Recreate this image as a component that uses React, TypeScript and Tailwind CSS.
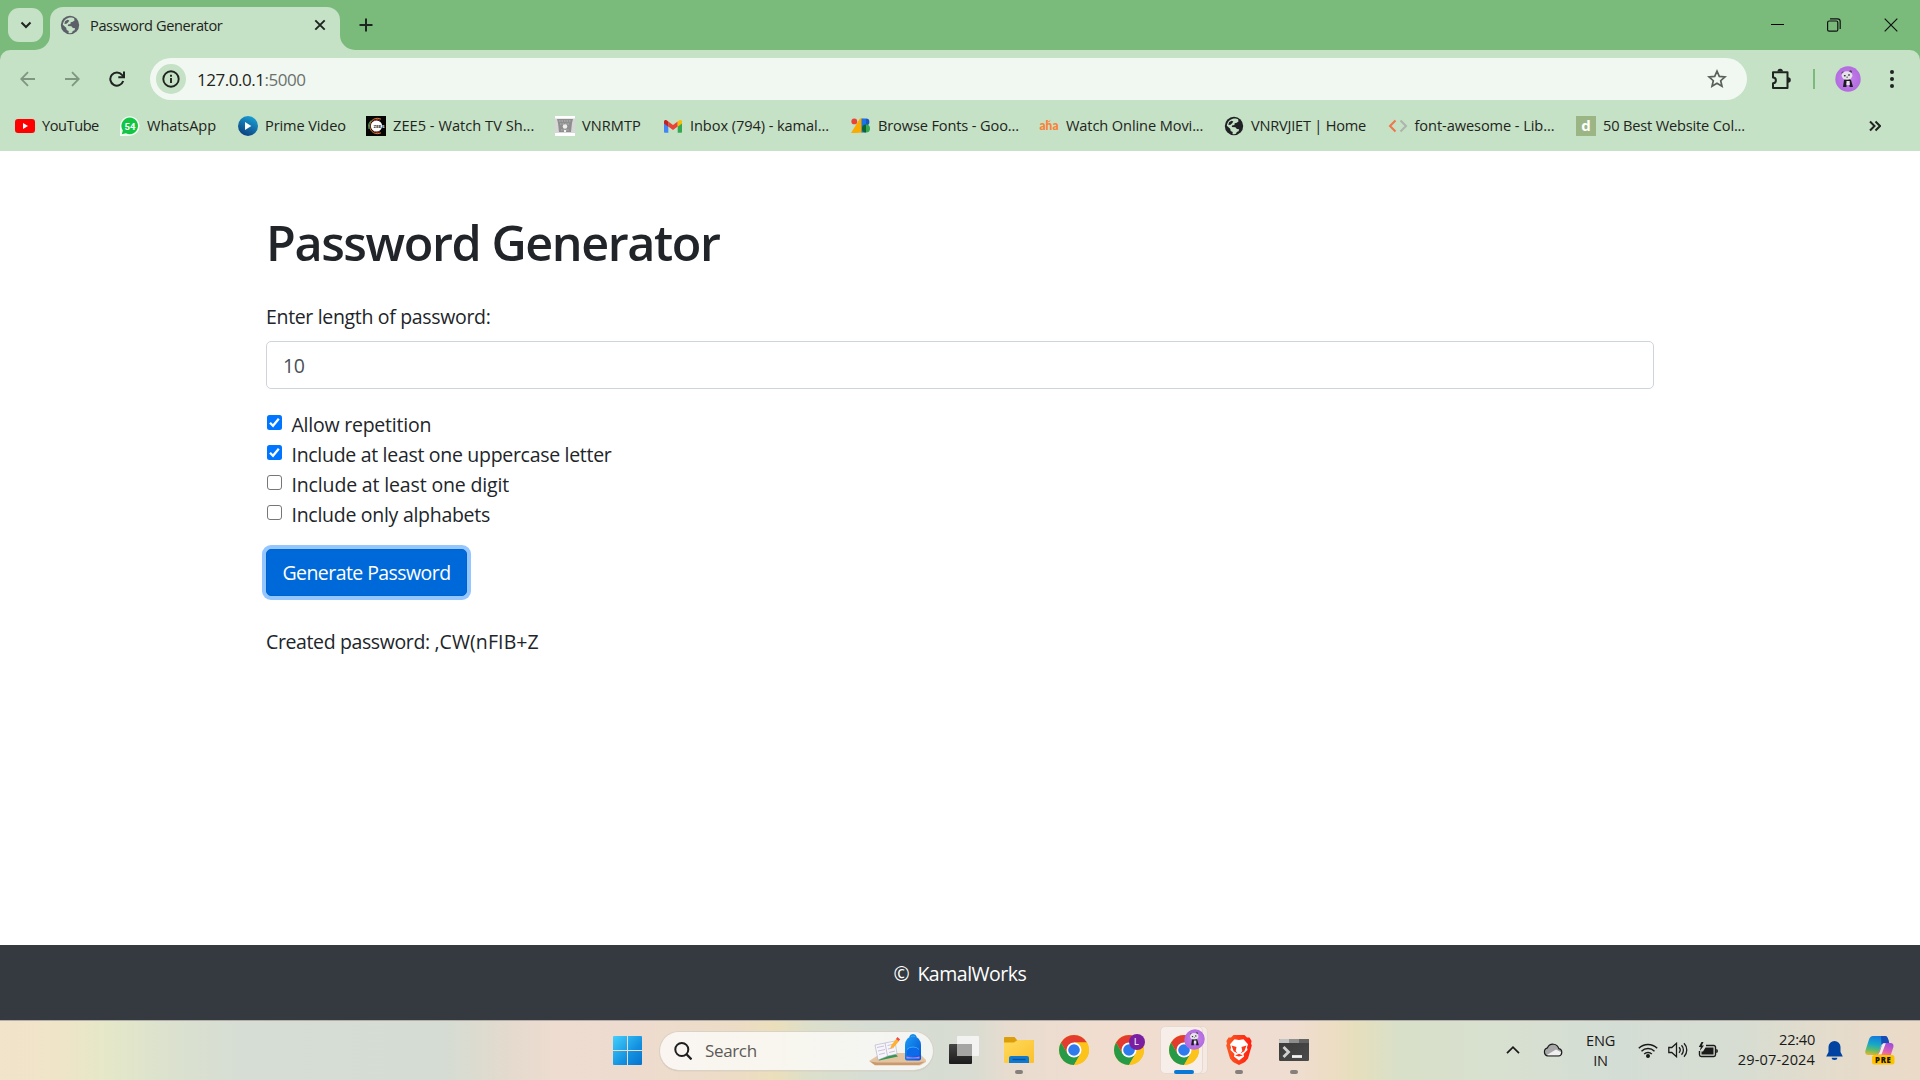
import React, { useId } from "react";

type IconProps = { className?: string };

function Globe({ className = "" }: IconProps) {
  return (
    <svg viewBox="0 0 20 20" className={className}>
      <circle cx="10" cy="10" r="9.200" fill="currentColor" />
      <path
        d="M9.500 2.600c1.500-.4 3.600 0 4.600.7l.4 2.200-1.800 1.300-2 .4-.3 1.900-2.300.5-.3 1.400 3.600.2 1.500 1.700 2.200.3-.5 2-1.800.8-.8 1.800c-1 .5-2.400.5-3.500.2l.2-1.900-2-1.200-.5-2.100-3.400-3C3.200 6.200 5.800 3.400 9.500 2.600z"
        fill="#c5e1c6"
      />
      <path d="M5 6.200l2.500-1.400 1.800.6-.9 1.700-1.800 1.600-2.200.2z" fill="currentColor" />
    </svg>
  );
}

function Chrome({ className = "" }: IconProps) {
  return (
    <svg viewBox="0 0 48 48" className={className}>
      <circle cx="24" cy="24" r="24" fill="#fbc116" />
      <path d="M24 24 L13.600 30 L3.220 12 A24 24 0 0 1 44.780 12 L24 12 Z" fill="#e33b2e" />
      <path d="M3.220 12 A24 24 0 0 0 24 48 L34.400 30 L24 30 L13.600 30 Z" fill="#269a46" />
      <path d="M24 12 H44.780 A24 24 0 0 1 24 48 L34.400 30 Z" fill="#fcc31b" />
      <circle cx="24" cy="24" r="12" fill="#fff" />
      <circle cx="24" cy="24" r="9.300" fill="#2f7bee" />
    </svg>
  );
}

function Panda({ className = "" }: IconProps) {
  const id = useId();
  return (
    <svg viewBox="0 0 26 26" className={className}>
      <defs>
        <radialGradient id={id}>
          <stop offset="0" stopColor="#c583ea" />
          <stop offset="1" stopColor="#b36be0" />
        </radialGradient>
      </defs>
      <circle cx="13" cy="13" r="12.700" fill={`url(#${id})`} />
      <path d="M9 14q3-3 7 0l2 7h-3.500v-4h-3v4H8z" fill="#1d1a22" />
      <circle cx="8" cy="7" r="1.500" fill="#4a4250" />
      <circle cx="15.500" cy="5.800" r="1.500" fill="#4a4250" />
      <ellipse cx="12" cy="9.500" rx="5.400" ry="4.200" fill="#e6e2ea" />
      <path d="M11.500 15h3.200v4h-3.200z" fill="#e9e5ee" />
      <ellipse cx="9.800" cy="9.800" rx="1" ry=".8" fill="#28222d" />
      <ellipse cx="14" cy="9" rx="1" ry=".8" fill="#28222d" />
      <circle cx="12.100" cy="11.200" r=".6" fill="#28222d" />
    </svg>
  );
}

const bookmarks = [
  {
    label: "YouTube",
    box: "w-[105px]",
    track: "tracking-[-0.45px]",
    icon: (
      <svg viewBox="0 0 20 20" className="size-5">
        <rect x="0" y="3" width="20" height="14" rx="3" fill="#f00" />
        <path d="M8 7v6l5-3z" fill="#fff" />
      </svg>
    ),
  },
  {
    label: "WhatsApp",
    box: "w-[118px]",
    track: "tracking-[-0.1px]",
    icon: (
      <svg viewBox="0 0 20 20" className="size-5">
        <path d="M0 20V10A9.800 9.800 0 1 1 10 19.800z" fill="#f4fff4" />
        <path d="M1.800 18.200l1-3.700A8.300 8.300 0 1 1 6 17.300z" fill="#12c544" />
        <text x="10" y="13.600" fontSize="9.500" fontWeight="700" textAnchor="middle" fill="#fff" fontFamily="Roboto, sans-serif">54</text>
      </svg>
    ),
  },
  {
    label: "Prime Video",
    box: "w-[128px]",
    track: "tracking-[-0.12px]",
    icon: (
      <svg viewBox="0 0 20 20" className="size-5">
        <defs>
          <linearGradient id="prime" x1="0.800" y1="0" x2="0.300" y2="1">
            <stop offset="0" stopColor="#1aa3d8" />
            <stop offset="1" stopColor="#0b3f7d" />
          </linearGradient>
        </defs>
        <circle cx="10" cy="10" r="10" fill="url(#prime)" />
        <path d="M7 6v8l6.300-4z" fill="#fff" />
      </svg>
    ),
  },
  {
    label: "ZEE5 - Watch TV Sh...",
    box: "w-[189px]",
    track: "tracking-[0.03px]",
    icon: (
      <svg viewBox="0 0 20 20" className="size-5">
        <rect width="20" height="20" fill="#050505" />
        <path d="M15 3.200A7.700 7.700 0 1 0 15 16.800" fill="none" stroke="#d8862a" strokeWidth="1" />
        <path d="M5 4.500A7.700 7.700 0 0 0 3 13" fill="none" stroke="#37a878" strokeWidth="1" />
        <path d="M14 4.200A6.300 6.300 0 1 0 14 15.800" fill="none" stroke="#c22f52" strokeWidth="1" />
        <circle cx="10.500" cy="10" r="5.600" fill="#fff" />
        <text x="7.500" y="11.600" fontSize="4.400" fontWeight="700" fill="#222" fontFamily="Roboto, sans-serif">ZEE</text>
        <text x="16" y="11.600" fontSize="4.400" fontWeight="700" fill="#fff" fontFamily="Roboto, sans-serif">5</text>
      </svg>
    ),
  },
  {
    label: "VNRMTP",
    box: "w-[108px]",
    track: "tracking-[0.05px]",
    icon: (
      <svg viewBox="0 0 20 20" className="size-5">
        <rect width="20" height="20" fill="#d7d7d7" />
        <rect width="20" height="2.500" fill="#fff" />
        <rect y="17" width="20" height="3" fill="#fff" />
        <path d="M2 3h16l-1 4-1 9H4L3 7z" fill="#8e8e8e" />
        <path d="M4 5h12M5 8h10M6 14h8" stroke="#c4c4c4" strokeWidth=".8" strokeDasharray="1.500 1" />
        <circle cx="10" cy="10.500" r="2.300" fill="#ededed" />
        <path d="M9 14h2v2H9z" fill="#f2f2f2" />
      </svg>
    ),
  },
  {
    label: "Inbox (794) - kamal...",
    box: "w-[188px]",
    track: "tracking-[-0.08px]",
    icon: (
      <svg viewBox="0 0 20 20" className="size-5">
        <path d="M1 6v9.800c0 .6.500 1 1 1h3.300V9z" fill="#4285f4" />
        <path d="M19 6v9.800c0 .6-.5 1-1 1h-3.300V9z" fill="#34a853" />
        <path d="M5.300 5.500v5L10 14l4.700-3.500v-5L10 9z" fill="#ea4335" />
        <path d="M1 5.500v2l4.300 3.200V5.500l-1.400-1C2.600 3.500 1 4.200 1 5.500z" fill="#c5221f" />
        <path d="M19 5.500v2l-4.300 3.200V5.500l1.400-1c1.300-1 2.900-.3 2.900 1z" fill="#fbbc04" />
      </svg>
    ),
  },
  {
    label: "Browse Fonts - Goo...",
    box: "w-[188px]",
    track: "tracking-[-0.14px]",
    icon: (
      <svg viewBox="0 0 20 20" className="size-5">
        <path d="M9 2.500h3.500v14L4 17H0z" fill="#f9ab00" />
        <circle cx="3.300" cy="5.400" r="2.900" fill="#ea4335" />
        <path d="M10.500 2.500H15v14h-4.500z" fill="#1a73e8" />
        <path d="M15 2.500a3.400 3.400 0 0 1 0 6.800z" fill="#1a56c4" />
        <path d="M15 8.600a4 4 0 0 1 0 8z" fill="#34a853" />
        <path d="M15 8.600a4 4 0 0 0 0 8z" fill="#0d652d" />
      </svg>
    ),
  },
  {
    label: "Watch Online Movi...",
    box: "w-[185px]",
    track: "tracking-[-0.11px]",
    icon: (
      <svg viewBox="0 0 20 20" className="size-5">
        <text x="0.500" y="14" fontSize="12.500" fontWeight="900" fill="#fb8138" textLength="19" lengthAdjust="spacingAndGlyphs" fontFamily="Lato, sans-serif">aha</text>
        <path d="M8.500 4.800l1.300 1 1.500-1.300" fill="none" stroke="#fb8138" strokeWidth="1" />
      </svg>
    ),
  },
  {
    label: "VNRVJIET | Home",
    box: "w-[163.500px]",
    track: "tracking-[-0.22px]",
    icon: <Globe className="size-5 shrink-0 text-[#202124]" />,
  },
  {
    label: "font-awesome - Lib...",
    box: "w-[188.500px]",
    track: "tracking-[-0.08px]",
    icon: (
      <svg viewBox="0 0 20 20" className="size-5" fill="none" strokeWidth="2">
        <path d="M7.500 4.500L2 10l5.500 5.500" stroke="#f0764a" />
        <path d="M12.500 4.500L18 10l-5.500 5.500" stroke="#adb5ab" />
      </svg>
    ),
  },
  {
    label: "50 Best Website Col...",
    box: "w-[180px]",
    track: "tracking-[-0.17px]",
    icon: (
      <span className="flex size-5 shrink-0 items-center justify-center bg-[#9bb585] font-['Open_Sans',sans-serif] text-[15px] leading-none font-bold text-white">d</span>
    ),
  },
];

const options = [
  { label: "Allow repetition", on: true, track: "tracking-[-0.23px]" },
  { label: "Include at least one uppercase letter", on: true, track: "tracking-[-0.3px]" },
  { label: "Include at least one digit", on: false, track: "tracking-[-0.15px]" },
  { label: "Include only alphabets", on: false, track: "tracking-[-0.28px]" },
];

function TabStrip() {
  return (
    <div className="flex h-[50px] items-start bg-[#7abb7c]">
      <button className="relative z-10 mt-2 ml-2 flex h-[34px] w-[35px] items-center justify-center rounded-[11px] bg-[#c5e1c6]">
        <svg viewBox="0 0 12 8" className="h-2 w-3" fill="none" stroke="#1f2420" strokeWidth="2">
          <path d="M1.500 1.500L6 6l4.500-4.500" />
        </svg>
      </button>
      <div className="relative mt-[7px] ml-[7px] flex h-[43px] w-[290px] items-center rounded-t-[13px] bg-[#c5e1c6] pb-[7px] pl-[10px]">
        <svg viewBox="0 0 15 15" className="absolute bottom-0 -left-[15px] size-[15px]">
          <path d="M15 0v15H0A15 15 0 0 0 15 0z" fill="#c5e1c6" />
        </svg>
        <svg viewBox="0 0 15 15" className="absolute -right-[15px] bottom-0 size-[15px]">
          <path d="M0 0v15h15A15 15 0 0 1 0 0z" fill="#c5e1c6" />
        </svg>
        <Globe className="size-5 text-[#5b6068]" />
        <span className="mt-px ml-[10px] text-[14.600px] tracking-[-0.4px] whitespace-pre text-[#1f2420]">Password Generator</span>
        <svg viewBox="0 0 12 12" className="mr-[14px] ml-auto size-3" stroke="#1f2420" strokeWidth="1.900">
          <path d="M1.300 1.300l9.400 9.400M10.700 1.300l-9.400 9.400" />
        </svg>
      </div>
      <svg viewBox="0 0 14 14" className="mt-[18px] ml-[18.500px] size-[14px]" stroke="#1f2420" strokeWidth="2">
        <path d="M7 .5v13M.5 7h13" />
      </svg>
      <div className="mt-[18px] mr-[22px] ml-auto flex gap-[43px]">
        <svg viewBox="0 0 14 14" className="size-[14px]" stroke="#000" strokeWidth="1">
          <path d="M1 6.500h13" />
        </svg>
        <svg viewBox="0 0 14 14" className="size-[14px]" fill="none" stroke="#111" strokeWidth="1.200">
          <rect x=".6" y="3" width="10.200" height="10.200" rx="1.500" />
          <path d="M3 .8h7.500a2.700 2.700 0 0 1 2.700 2.700V11" />
        </svg>
        <svg viewBox="0 0 14 14" className="size-[14px]" stroke="#111" strokeWidth="1.200">
          <path d="M.7.7l12.600 12.600M13.300.7L.7 13.300" />
        </svg>
      </div>
    </div>
  );
}

function Toolbar() {
  return (
    <div className="bg-[#7abb7c]">
      <div className="flex h-[58px] items-center rounded-t-[10px] bg-[#c5e1c6]">
        <svg viewBox="0 0 16 16" className="ml-5 size-4" fill="none" stroke="#7f9681" strokeWidth="1.800">
          <path d="M15 8H1.500M8 1.200L1.200 8 8 14.800" />
        </svg>
        <svg viewBox="0 0 16 16" className="ml-[28px] size-4" fill="none" stroke="#7f9681" strokeWidth="1.800">
          <path d="M1 8h13.500M8 1.200L14.800 8 8 14.800" />
        </svg>
        <svg viewBox="0 0 16 16" className="ml-[29px] size-4" fill="none" stroke="#1f2420" strokeWidth="2">
          <path d="M14.200 10A6.600 6.600 0 1 1 13 3.800L14.500 5.500" />
          <path d="M15 .5v5.700H9.300" />
        </svg>
        <div className="ml-[25px] flex h-[42px] w-[1597px] items-center rounded-full bg-[#f1f8f2] pr-[20px] pl-[6px]">
          <span className="flex size-[30px] items-center justify-center rounded-full bg-[#c5e1c6]">
            <svg viewBox="0 0 18 18" className="size-[18px]" fill="none" stroke="#1f2420" strokeWidth="1.900">
              <circle cx="9" cy="9" r="7.700" />
              <path d="M9 8v5M9 4.800v2" />
            </svg>
          </span>
          <span className="mt-px ml-[11px] text-[17px] tracking-[-0.47px] whitespace-pre text-[#1f2420]">
            127.0.0.1<span className="text-[#6b716c]">:5000</span>
          </span>
          <svg viewBox="0 0 20 20" className="ml-auto size-5" fill="none" stroke="#5a605c" strokeWidth="1.700">
            <path d="M10 2.200l2.300 5.200 5.700.5-4.300 3.800 1.300 5.600-5-3-5 3 1.300-5.600L2 7.900l5.700-.5z" />
          </svg>
        </div>
        <svg viewBox="0 0 22 22" className="ml-[23px] size-[22px]">
          <path d="M3 4.200h14.500V20H3v-4.800a2.900 2.900 0 0 0 0-5.800z" fill="none" stroke="#1f2420" strokeWidth="2" strokeLinejoin="round" />
          <path d="M7.500 3.500a2.700 2.700 0 0 1 5.400 0zM18 9.200a2.700 2.700 0 0 1 0 5.600z" fill="#1f2420" />
        </svg>
        <span className="ml-[21px] h-5 w-[2px] bg-[#7abb7c]" />
        <Panda className="ml-5 size-[26px]" />
        <svg viewBox="0 0 4 18" className="ml-[29px] h-[18px] w-1" fill="#1f2420">
          <circle cx="2" cy="2" r="2" />
          <circle cx="2" cy="9" r="2" />
          <circle cx="2" cy="16" r="2" />
        </svg>
      </div>
    </div>
  );
}

function BookmarkBar() {
  return (
    <div className="flex h-[43px] items-center bg-[#c5e1c6] pb-[7px] pl-[15px] text-[14.600px] text-[#1f2420]">
      {bookmarks.map((b) => (
        <div key={b.label} className={`flex shrink-0 items-center gap-[7px] ${b.box}`}>
          {b.icon}
          <span className={`whitespace-pre ${b.track}`}>{b.label}</span>
        </div>
      ))}
      <svg viewBox="0 0 12 12" className="mr-[39px] ml-auto size-3" fill="none" stroke="#1f2420" strokeWidth="2">
        <path d="M1 1.500L5.500 6 1 10.500M6.500 1.500L11 6l-4.500 4.500" />
      </svg>
    </div>
  );
}

function Page() {
  return (
    <main className="h-[794px] bg-white px-[266px] pt-[61px] text-[19.500px] leading-[30px] text-[#212529]">
      <h1 className="text-[48.500px] leading-[60px] font-semibold tracking-[-1.400px] whitespace-pre">Password Generator</h1>
      <p className="mt-[30px] tracking-[-0.33px]">Enter length of password:</p>
      <div className="mt-[9px] flex h-12 items-center rounded-[5px] border border-[#ced4da] pt-px pl-4 tracking-[-0.5px] text-[#495057]">10</div>
      <div className="mt-5">
        {options.map((o) => (
          <div key={o.label} className="flex h-[30px] items-start">
            {o.on ? (
              <svg viewBox="0 0 15 15" className="mt-[6px] ml-[0.500px] size-[15px]">
                <rect width="15" height="15" rx="2.500" fill="#0075ff" />
                <path d="M3 7.800l3 3 5.800-7" fill="none" stroke="#fff" strokeWidth="2.300" />
              </svg>
            ) : (
              <span className="mt-[6px] ml-[0.500px] size-[15px] rounded-[3px] border border-[#767676]" />
            )}
            <span className={`mt-px ml-[10px] whitespace-pre ${o.track}`}>{o.label}</span>
          </div>
        ))}
      </div>
      <button className="mt-5 flex h-[47px] w-[201px] items-center justify-center rounded-[5px] border border-[#0062cc] bg-[#0069d9] tracking-[-0.57px] whitespace-pre text-white ring-4 ring-[#94c6ff]">
        Generate Password
      </button>
      <p className="mt-[31px] whitespace-pre">
        <span className="tracking-[-0.38px]">Created password: </span>
        <span className="tracking-[0.1px]">,CW(nFIB+Z</span>
      </p>
    </main>
  );
}

function WindowsLogo() {
  return (
    <svg viewBox="0 0 29 29" className="size-[29px]">
      <defs>
        <linearGradient id="win" x1="0" y1="0" x2="1" y2="1">
          <stop offset="0" stopColor="#45cffc" />
          <stop offset="0.600" stopColor="#1391e0" />
          <stop offset="1" stopColor="#0673cd" />
        </linearGradient>
      </defs>
      <path d="M1 0h13v14H0V1a1 1 0 0 1 1-1zM15 0h13a1 1 0 0 1 1 1v13H15zM0 15h14v14H1a1 1 0 0 1-1-1zM15 15h14v13a1 1 0 0 1-1 1H15z" fill="url(#win)" />
    </svg>
  );
}

function SearchArt() {
  return (
    <svg viewBox="0 0 58 34" className="h-[34px] w-[58px]">
      <defs>
        <linearGradient id="bag" x1="0" y1="0" x2="1" y2="1">
          <stop offset="0" stopColor="#1b9cf5" />
          <stop offset="1" stopColor="#0452d4" />
        </linearGradient>
      </defs>
      <path d="M0 27l8-5 12-3h30l7 7v2l-6 3.500H6z" fill="#e4c3a0" />
      <path d="M1 27.500l5 3.500h44l6-3.500-6 1H8z" fill="#c99a6e" />
      <path d="M7 15l3 11.500 19-4-3-3z" fill="#359552" />
      <path d="M6 11l10-2 10-2 2 13-9 2-10 4z" fill="#f7f5fb" stroke="#9aa2b8" strokeWidth=".5" />
      <path d="M16 9l2.500 13M8 13.500l7-1.500M9 17l7-1.500M10 20.500l6-1.500M18.500 11.500l6-1.300M19 15l6-1.400M20 18.500l6-1.400" stroke="#bdb6cb" strokeWidth=".8" fill="none" />
      <path d="M21 15l1.500-4 5-6.500 2.700 2.600-5.200 6z" fill="#ffb02e" />
      <path d="M27 5L28.500 3l2.700 2.600-1.500 1.500z" fill="#f0484c" />
      <path d="M41 3a3.200 3.200 0 0 1 6 0" fill="none" stroke="#1386e8" strokeWidth="1.600" />
      <path d="M36 11a8 9 0 0 1 16 0v13.500a2 2 0 0 1-2 2H38a2 2 0 0 1-2-2z" fill="url(#bag)" />
      <path d="M38 17.500a6 4 0 0 1 12 0v4H38z" fill="#0b6bea" />
      <path d="M38 15.500a6.500 4 0 0 1 12 0" fill="none" stroke="#3db3ff" strokeWidth=".8" />
      <path d="M37.500 22.500q6.500 2 13 0v2h-13z" fill="#c37df5" />
    </svg>
  );
}

const apps = [
  {
    name: "task-view",
    mark: "",
    icon: (
      <svg viewBox="0 0 30 28" className="h-7 w-[30px]">
        <defs>
          <linearGradient id="tv" x1="0" y1="0" x2="0" y2="1">
            <stop offset="0" stopColor="#454545" />
            <stop offset="1" stopColor="#1b1b1b" />
          </linearGradient>
        </defs>
        <rect x="0" y="8" width="23" height="20" rx="1" fill="url(#tv)" />
        <rect x="8" y="0" width="22" height="20" rx="1" fill="#f7f7f7" fillOpacity=".85" />
        <path d="M8 8h15v12H8z" fill="#a5a5a3" />
      </svg>
    ),
  },
  {
    name: "explorer",
    mark: "mx-auto h-1 w-2 rounded-full bg-[#85807b]",
    icon: (
      <svg viewBox="0 0 30 26" className="h-[26px] w-[30px]">
        <defs>
          <linearGradient id="fold" x1="0" y1="0" x2="1" y2="1">
            <stop offset="0" stopColor="#ffda5c" />
            <stop offset="1" stopColor="#fbc02d" />
          </linearGradient>
        </defs>
        <path d="M0 1a1 1 0 0 1 1-1h9.500L13 3h16a1 1 0 0 1 1 1v6H0z" fill="#dc9d0b" />
        <path d="M0 5.500h10L13.500 3H29a1 1 0 0 1 1 1v21a1 1 0 0 1-1 1H1a1 1 0 0 1-1-1z" fill="url(#fold)" />
        <path d="M5 26v-5a2 2 0 0 1 2-2h16a2 2 0 0 1 2 2v5z" fill="#0f7ad0" />
        <path d="M8.500 22.500h13" stroke="#0b4f94" strokeWidth="1.300" />
      </svg>
    ),
  },
  { name: "chrome", mark: "", icon: <Chrome className="size-[30px]" /> },
  {
    name: "chrome-l",
    mark: "",
    icon: (
      <span className="relative">
        <Chrome className="size-[30px]" />
        <span className="absolute -top-px left-[15px] flex size-4 items-center justify-center rounded-full bg-[#7a1ea2] font-[Roboto,sans-serif] text-[9px] leading-none text-white">L</span>
      </span>
    ),
  },
  {
    name: "chrome-panda",
    mark: "mx-auto h-1 w-5 rounded-full bg-[#0a78d4]",
    icon: (
      <span className="relative">
        <Chrome className="size-[30px]" />
        <Panda className="absolute -top-[5px] left-[15px] size-5" />
        <Panda className="absolute -top-[6px] left-4 size-5" />
      </span>
    ),
  },
  {
    name: "brave",
    mark: "mx-auto h-1 w-2 rounded-full bg-[#85807b]",
    icon: (
      <svg viewBox="0 0 26 30" className="h-[30px] w-[26px]">
        <defs>
          <linearGradient id="brave" x1="0" y1="0" x2="1" y2="0">
            <stop offset="0" stopColor="#fb5a22" />
            <stop offset="1" stopColor="#ff1e10" />
          </linearGradient>
        </defs>
        <path d="M7.500 0h11l2.500 2.600L23.500 2.500 25.600 6 25 8.500l.8 2L22 23.500 19 27l-6 3-6-3-3-3.500L.2 10.500l.8-2L.4 6l2.100-3.500 2.500.1z" fill="url(#brave)" />
        <path d="M13 5l4.500-.8 4.500 5-1 3 .5 2.800-4 4 .6 2.500L13 25.500 7.900 21.500l.6-2.500-4-4 .5-2.800-1-3 4.500-5z" fill="#fff" />
        <path d="M5.500 10.500l5 1.500-.8 4 2 2.500-4-2.200zM20.500 10.500l-5 1.500.8 4-2 2.500 4-2.200zM9 20.500l4-1.800 4 1.800-4 1z" fill="#fb3a1b" />
      </svg>
    ),
  },
  {
    name: "terminal",
    mark: "mx-auto h-1 w-2 rounded-full bg-[#85807b]",
    icon: (
      <svg viewBox="0 0 30 22" className="h-[22px] w-[30px]">
        <defs>
          <linearGradient id="term" x1="0" y1="0" x2="1" y2="1">
            <stop offset="0" stopColor="#3a3a3a" />
            <stop offset="1" stopColor="#4b4b4b" />
          </linearGradient>
        </defs>
        <rect width="30" height="22" rx="1.200" fill="url(#term)" />
        <path d="M1 0h9v4H0V1a1 1 0 0 1 1-1z" fill="#c3c3c3" />
        <path d="M10 0h10v4H10z" fill="#8e8e8e" />
        <path d="M20 0h9a1 1 0 0 1 1 1v3H20z" fill="#626262" />
        <path d="M4.500 8l5 5-5 5" fill="none" stroke="#d0d0d0" strokeWidth="2.800" />
        <path d="M13 17.500h10" stroke="#f2f2f2" strokeWidth="2.800" />
      </svg>
    ),
  },
];

function Tray() {
  return (
    <div className="ml-auto flex h-full items-center pb-px">
      <svg viewBox="0 0 14 8" className="h-2 w-[14px]" fill="none" stroke="#1a1a1a" strokeWidth="1.700">
        <path d="M1 7.200L7 1.200l6 6" />
      </svg>
      <svg viewBox="0 0 20 14" className="ml-[23px] h-[14px] w-5">
        <path d="M5 13a4.200 4.200 0 0 1-.5-8.200 6 6 0 0 1 11.300.9A3.700 3.700 0 0 1 15.500 13z" fill="#a7a7a7" />
        <path d="M3 12.500L13 6.500l5.500 3-1 3z" fill="#f0f0f0" />
        <path d="M5 13a4.200 4.200 0 0 1-.5-8.200 6 6 0 0 1 11.300.9A3.700 3.700 0 0 1 15.500 13z" fill="none" stroke="#1a1a1a" strokeWidth="1.200" />
      </svg>
      <div className="ml-[23px] w-[29px] text-center text-[14.600px] leading-[20px] tracking-[-0.2px]">
        <div>ENG</div>
        <div>IN</div>
      </div>
      <svg viewBox="0 0 20 16" className="ml-[23px] h-4 w-5" fill="none" stroke="#1a1a1a" strokeWidth="1.400">
        <path d="M.8 6.300a13 13 0 0 1 18.400 0M3.500 9.200a9.200 9.200 0 0 1 13 0M6.200 12a5.400 5.400 0 0 1 7.600 0" />
        <circle cx="10" cy="14" r="1.300" fill="#1a1a1a" />
      </svg>
      <svg viewBox="0 0 20 16" className="ml-[10px] h-4 w-5" fill="none" stroke="#1a1a1a" strokeWidth="1.300">
        <path d="M.8 5.500h3L8.500 1.300v13.400L3.800 10.500h-3zM11 5.300a4 4 0 0 1 0 5.400M13.500 3.200a7 7 0 0 1 0 9.600M16 1.200a9.700 9.700 0 0 1 0 13.600" />
      </svg>
      <svg viewBox="0 0 20 16" className="ml-[10px] h-4 w-5">
        <path d="M8 3.500h7.800a1.700 1.700 0 0 1 1.700 1.700v7.600a1.700 1.700 0 0 1-1.700 1.700H3.200a1.700 1.700 0 0 1-1.700-1.700V9" fill="none" stroke="#1a1a1a" strokeWidth="1.400" />
        <path d="M7.500 5.500h8v7h-12V9.500H5z" fill="#1a1a1a" />
        <path d="M18.200 7v4l1.600-.8V7.800z" fill="#1a1a1a" />
        <path d="M3.500 0L.8 5h2l-1 4L6 3.500H3.800L5.500 0z" fill="#1a1a1a" />
      </svg>
      <div className="ml-[19px] w-[78px] pb-[2px] text-right text-[14.600px] leading-[20px]">
        <div className="tracking-[-0.25px]">22:40</div>
        <div className="tracking-[0.1px]">29-07-2024</div>
      </div>
      <svg viewBox="0 0 17 19" className="ml-[11px] h-[19px] w-[17px]" fill="#0043a0">
        <path d="M8.500 0a6 6 0 0 1 6 6v5l2.300 4.500H.2L2.500 11V6a6 6 0 0 1 6-6zM5.700 16.800h5.600a2.800 2.200 0 0 1-5.600 0z" />
      </svg>
      <svg viewBox="0 0 30 29" className="mr-[25px] ml-[22px] h-[29px] w-[30px]">
        <defs>
          <linearGradient id="copL" x1="0.500" y1="0" x2="0.300" y2="1">
            <stop offset="0" stopColor="#1678dc" />
            <stop offset="0.450" stopColor="#16a8c8" />
            <stop offset="0.750" stopColor="#5fbc6a" />
            <stop offset="1" stopColor="#e0b62c" />
          </linearGradient>
          <linearGradient id="copR" x1="0.700" y1="0" x2="0.300" y2="1">
            <stop offset="0" stopColor="#a04be0" />
            <stop offset="0.600" stopColor="#df60b0" />
            <stop offset="1" stopColor="#fa8a70" />
          </linearGradient>
        </defs>
        <path d="M18 7h7.500c2.500 0 3.500 2 2.800 4.300L25.500 20H11z" fill="url(#copR)" />
        <path d="M8 0h12c2 0 2.800 2 3.400 4l.8 3h-4.500c-2 0-3 1-3.700 3l-2 6c-.7 2-1.700 3-3.500 3H3c-2.300 0-3.200-2-2.600-4.200L4 3.500C4.700 1.300 6 0 8 0z" fill="url(#copL)" />
        <path d="M16 0h4c2 0 2.800 2 3.400 4l.8 3h-4.500c-1.500 0-2.500.6-3.200 2z" fill="#174bb5" />
        <path d="M18.500 7.200h2.300l-4.300 11.300h-4c1.300-.5 1.900-1.500 2.400-3l1.800-5.500c.4-1.300 1-2.300 1.800-2.800z" fill="#f0eee8" />
        <rect x="7" y="19" width="22.500" height="9.500" rx="2.500" fill="#fdc300" />
        <text x="18.300" y="26.600" fontSize="7.800" fontWeight="800" textAnchor="middle" letterSpacing=".7" fill="#1a1400" fontFamily="Open Sans, sans-serif">PRE</text>
      </svg>
    </div>
  );
}

function Taskbar() {
  return (
    <div className="flex h-[60px] items-center border-t border-[#b3aeaa] bg-[linear-gradient(90deg,#f2e3cb_0px,#efe4c8_60px,#e5e8c8_105px,#dce2cd_160px,#d6ddd4_240px,#d4dcd3_440px,#e4dacd_510px,#efdcd1_560px,#eedbcf_630px,#ecdcc5_740px,#ebdfbb_775px,#dcdfcb_810px,#d6ddd4_870px,#d8dcd2_970px,#e8dccf_1010px,#f0ddd0_1100px,#f0ddd1_1290px,#ecddc3_1335px,#e6dfbd_1355px,#d8e0c9_1400px,#d8e0d0_1500px,#d4ddd5_1620px,#d7ddd2_1740px,#e3dccc_1820px,#ecdac8_1920px)] text-[#1a1a1a]">
      <div className="ml-[613px]">
        <WindowsLogo />
      </div>
      <div className="ml-[18px] flex h-[38px] w-[273px] items-center rounded-full bg-[linear-gradient(90deg,#faf5f1,#f8f6ee_40%,#f3f5f3)] pl-[14px] shadow-[0_0_0_1px_#d9d2c6,0_1px_1px_#aaa59c]">
        <svg viewBox="0 0 18 18" className="size-[18px]" fill="none" stroke="#1f1f1f" strokeWidth="2">
          <circle cx="7.800" cy="7.500" r="6.500" />
          <path d="M12.500 12.200l5 5.200" strokeWidth="2.300" />
        </svg>
        <span className="ml-[13px] text-[17px] tracking-[-0.35px] text-[#5c5a58]">Search</span>
        <span className="mr-[6px] ml-auto">
          <SearchArt />
        </span>
      </div>
      <div className="ml-[3px] flex h-full">
        {apps.map((a) => (
          <div key={a.name} className="relative flex h-full w-[55px] flex-col">
            {a.name === "chrome-panda" && (
              <>
                <span className="absolute top-[5px] left-[10px] h-12 w-[42px] rounded-[5px] border border-[#e6d9d0] bg-[#f5e9e2]" />
                <span className="absolute top-[5px] left-1 h-12 w-[43px] rounded-[5px] border border-[#e6d9d0] bg-[#f8eee9]" />
              </>
            )}
            <div className="relative flex h-[49px] items-center justify-center pt-[9px]">{a.icon}</div>
            <span className={`relative ${a.mark}`} />
          </div>
        ))}
      </div>
      <Tray />
    </div>
  );
}

export default function App() {
  return (
    <div className="flex h-[1080px] w-[1920px] flex-col overflow-hidden bg-white font-['Open_Sans','Noto_Sans',sans-serif]">
      <TabStrip />
      <Toolbar />
      <BookmarkBar />
      <Page />
      <footer className="h-[75px] bg-[#343a40] pt-[14px] text-center text-[19.500px] leading-[30px] text-white">
        ©<span className="ml-[3px] tracking-[-0.48px]"> KamalWorks</span>
      </footer>
      <Taskbar />
    </div>
  );
}
